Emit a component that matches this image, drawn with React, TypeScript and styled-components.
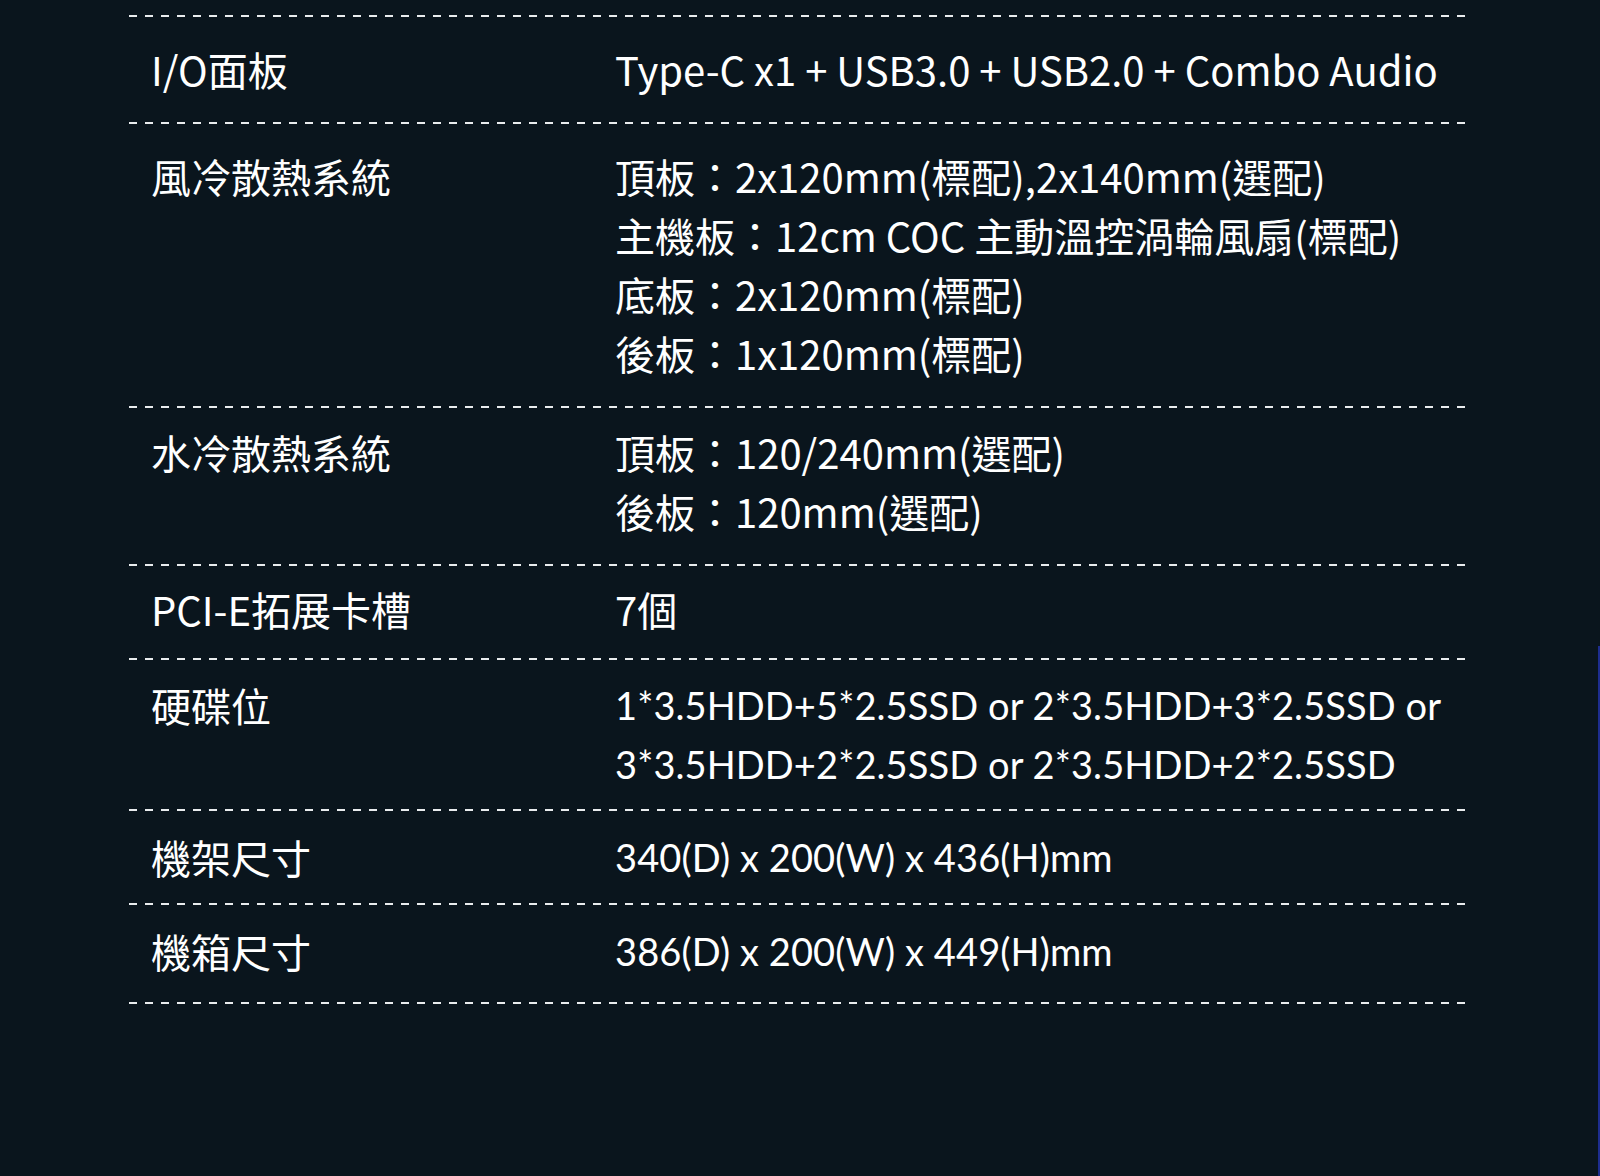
import React from "react";
import styled, { createGlobalStyle } from "styled-components";

const GlobalStyle = createGlobalStyle`
  html, body {
    margin: 0;
    padding: 0;
    background: #0a151d;
  }
  body {
    font-family: "Noto Sans CJK TC", "Noto Sans", sans-serif;
    color: #ffffff;
  }
`;

const Page = styled.div`
  position: relative;
  min-height: 1176px;
  box-sizing: border-box;
  padding-top: 15px;
  background: #0a151d;
  overflow: hidden;
`;

const SideStrip = styled.div`
  position: absolute;
  right: 0;
  top: 646px;
  bottom: 0;
  width: 2px;
  background: #1d2d8e;
`;

const Table = styled.div`
  width: 1336px;
  margin-left: 129px;
  display: flex;
  flex-direction: column;
`;

const Divider = styled.div`
  height: 2px;
  width: 100%;
  background-image: repeating-linear-gradient(
    to right,
    #e9ecee 0px,
    #e9ecee 8px,
    transparent 8px,
    transparent 16px
  );
`;

const Row = styled.div<{ $pt: number; $pb: number }>`
  display: grid;
  grid-template-columns: 488px 1fr;
  padding-top: ${(p) => p.$pt}px;
  padding-bottom: ${(p) => p.$pb}px;
`;

const Label = styled.div`
  padding-left: 22px;
  font-family: "Noto Sans CJK TC", "Noto Sans", sans-serif;
  font-size: 40px;
  line-height: 59px;
  color: #ffffff;
  white-space: nowrap;
`;

const Values = styled.div`
  display: flex;
  flex-direction: column;
  margin-left: -2px;
`;

const Line = styled.div<{ $geo?: boolean }>`
  font-family: ${(p) =>
    p.$geo
      ? `Lato, "Noto Sans CJK TC", sans-serif`
      : `"Noto Sans CJK TC", "Noto Sans", sans-serif`};
  font-size: ${(p) => (p.$geo ? 38 : 40)}px;
  letter-spacing: ${(p) => (p.$geo ? "0.1px" : "0")};
  line-height: 59px;
  color: #ffffff;
  white-space: nowrap;
`;

type Spec = {
  label: string;
  lines: string[];
  geo?: boolean;
  pt: number;
  pb: number;
};

const specs: Spec[] = [
  {
    label: "I/O面板",
    lines: ["Type-C x1 + USB3.0 + USB2.0 + Combo Audio"],
    pt: 23,
    pb: 23,
  },
  {
    label: "風冷散熱系統",
    lines: [
      "頂板：2x120mm(標配),2x140mm(選配)",
      "主機板：12cm COC 主動溫控渦輪風扇(標配)",
      "底板：2x120mm(標配)",
      "後板：1x120mm(標配)",
    ],
    pt: 23,
    pb: 23,
  },
  {
    label: "水冷散熱系統",
    lines: ["頂板：120/240mm(選配)", "後板：120mm(選配)"],
    pt: 15,
    pb: 23,
  },
  {
    label: "PCI-E拓展卡槽",
    lines: ["7個"],
    pt: 14,
    pb: 19,
  },
  {
    label: "硬碟位",
    lines: [
      "1*3.5HDD+5*2.5SSD or 2*3.5HDD+3*2.5SSD or",
      "3*3.5HDD+2*2.5SSD or 2*3.5HDD+2*2.5SSD",
    ],
    geo: true,
    pt: 16,
    pb: 15,
  },
  {
    label: "機架尺寸",
    lines: ["340(D) x 200(W) x 436(H)mm"],
    geo: true,
    pt: 17,
    pb: 16,
  },
  {
    label: "機箱尺寸",
    lines: ["386(D) x 200(W) x 449(H)mm"],
    geo: true,
    pt: 17,
    pb: 21,
  },
];

export default function App() {
  return (
    <>
      <GlobalStyle />
      <Page>
        <Table>
          <Divider />
          {specs.map((s) => (
            <React.Fragment key={s.label}>
              <Row $pt={s.pt} $pb={s.pb}>
                <Label>{s.label}</Label>
                <Values>
                  {s.lines.map((l) => (
                    <Line key={l} $geo={s.geo}>
                      {l}
                    </Line>
                  ))}
                </Values>
              </Row>
              <Divider />
            </React.Fragment>
          ))}
        </Table>
        <SideStrip />
      </Page>
    </>
  );
}
